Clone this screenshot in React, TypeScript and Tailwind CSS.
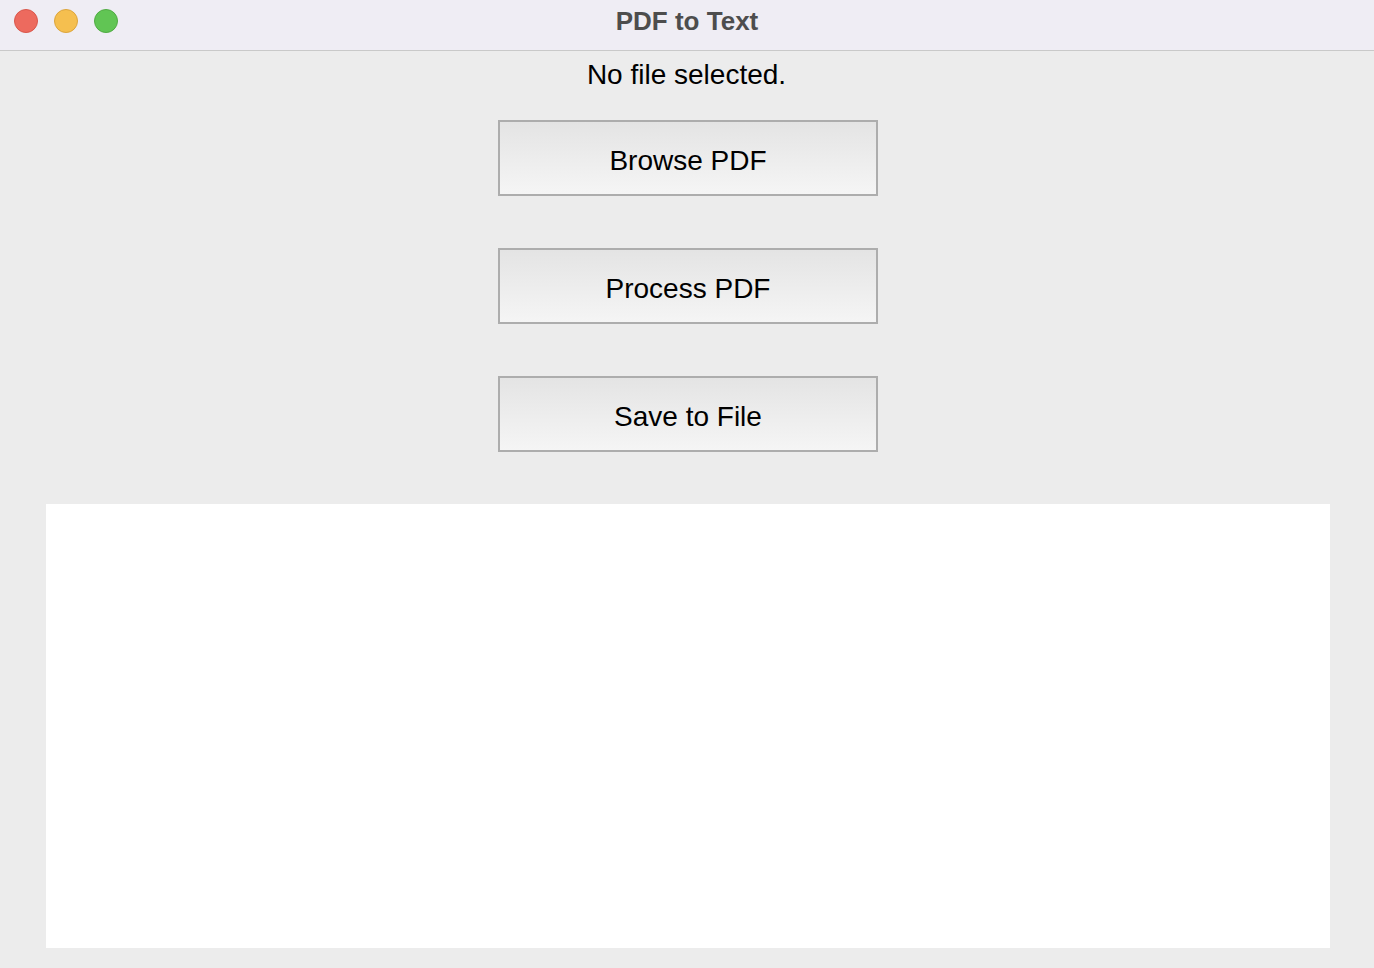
export default function App() {
  const btn =
    "w-[380px] h-[76px] border-2 border-[#adadad] bg-gradient-to-b from-[#e4e4e4] to-[#f5f5f5] text-[28px] text-black flex items-center justify-center pt-[5px]";
  return (
    <div className="w-[1374px] h-[968px] bg-[#ececec] flex flex-col" style={{ fontFamily: '"Liberation Sans", Arial, sans-serif' }}>
      <div className="h-[51px] bg-[#efedf4] border-b border-[#c9c9c9] flex items-start relative shrink-0">
        <div className="flex gap-[16px] pl-[14px] pt-[9px]">
          <div className="w-[24px] h-[24px] rounded-full bg-[#ed6a5e] border border-[#d9574b]" />
          <div className="w-[24px] h-[24px] rounded-full bg-[#f5bf4f] border border-[#dca53c]" />
          <div className="w-[24px] h-[24px] rounded-full bg-[#61c554] border border-[#50ab43]" />
        </div>
        <div className="absolute inset-0 flex items-center justify-center text-[26px] font-bold text-[#4d4d4d] pb-[8px] pointer-events-none">
          PDF to Text
        </div>
      </div>
      <div className="flex flex-col items-center flex-1 pl-[2px]">
        <div className="text-[28px] text-black leading-[32px] mt-[8px] mr-[3px]">No file selected.</div>
        <div className="flex flex-col items-center gap-[52px] mt-[29px]">
          <div className={btn}>Browse PDF</div>
          <div className={btn}>Process PDF</div>
          <div className={btn}>Save to File</div>
        </div>
        <div className="mt-[52px] w-[1284px] h-[444px] bg-white" />
      </div>
    </div>
  );
}
